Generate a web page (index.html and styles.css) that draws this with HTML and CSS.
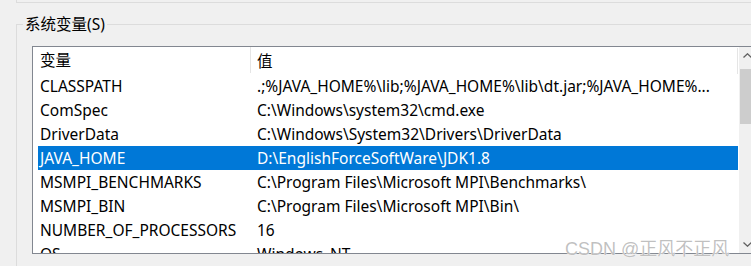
FILE: index.html
```html
<!DOCTYPE html>
<html lang="zh-CN">

<head>
  <meta charset="UTF-8">
  <title>系统变量</title>
  <link rel="stylesheet" href="styles.css">
</head>

<body>
  <div class="prev-group"></div>
  <fieldset class="group">
    <legend>系统变量(S)</legend>
    <div class="list">
      <div class="list-body">
        <div class="row head">
          <span class="c1">变量</span>
          <span class="c2">值</span>
        </div>
        <div class="row"><span class="c1">CLASSPATH</span><span class="c2">.;%JAVA_HOME%\lib;%JAVA_HOME%\lib\dt.jar;%JAVA_HOME%...</span></div>
        <div class="row"><span class="c1">ComSpec</span><span class="c2">C:\Windows\system32\cmd.exe</span></div>
        <div class="row"><span class="c1">DriverData</span><span class="c2">C:\Windows\System32\Drivers\DriverData</span></div>
        <div class="row selected"><span class="c1">JAVA_HOME</span><span class="c2">D:\EnglishForceSoftWare\JDK1.8</span></div>
        <div class="row"><span class="c1">MSMPI_BENCHMARKS</span><span class="c2">C:\Program Files\Microsoft MPI\Benchmarks\</span></div>
        <div class="row"><span class="c1">MSMPI_BIN</span><span class="c2">C:\Program Files\Microsoft MPI\Bin\</span></div>
        <div class="row"><span class="c1">NUMBER_OF_PROCESSORS</span><span class="c2">16</span></div>
        <div class="row"><span class="c1">OS</span><span class="c2">Windows_NT</span></div>
      </div>
      <div class="scrollbar">
        <span class="arrow">
          <svg width="9" height="5" viewBox="0 0 9 5"><polyline points="0.5,4.5 4.5,0.8 8.5,4.5" fill="none" stroke="#606060" stroke-width="1.3"/></svg>
        </span>
        <span class="thumb"></span>
        <span class="track"></span>
        <span class="arrow">
          <svg width="9" height="5" viewBox="0 0 9 5"><polyline points="0.5,0.5 4.5,4.2 8.5,0.5" fill="none" stroke="#606060" stroke-width="1.3"/></svg>
        </span>
      </div>
    </div>
  </fieldset>
  <div class="mark">CSDN @正风不正风</div>
</body>

</html>
```

FILE: styles.css
```css
* {
  box-sizing: border-box;
}

html {
  overflow: hidden;
}

body {
  margin: 0;
  width: 751px;
  height: 266px;
  overflow: hidden;
  position: relative;
  background: #f0f0f0;
  font-family: "Noto Sans", "Noto Sans CJK SC", sans-serif;
  font-size: 15.5px;
  color: #000;
}

/* 上一个分组框的底边 */
.prev-group {
  margin-left: 16px;
  height: 3px;
  border-left: 1px solid #dcdcdc;
  border-bottom: 1px solid #dcdcdc;
}

.group {
  margin: 11px 0 0 16px;
  padding: 0;
  width: 760px;
  height: 260px;
  border: 1px solid #dcdcdc;
}

.group legend {
  margin-left: 6px;
  padding: 0 2px;
  line-height: 20px;
}

.list {
  display: flex;
  margin: 12px 0 0 15px;
  width: 725px;
  height: 208px;
  border: 1px solid #828790;
  background: #fff;
}

.list-body {
  flex: 1;
  overflow: hidden;
}

.row {
  display: flex;
  height: 24px;
  margin: 0 1px 0 5px;
  align-items: center;
  white-space: nowrap;
}

.row.head {
  height: 27px;
}

.c1 {
  width: 213px;
  padding-left: 2px;
  overflow: hidden;
}

.c2 {
  flex: 1;
  padding-left: 6px;
  overflow: hidden;
}

.head .c1,
.head .c2 {
  height: 26px;
  line-height: 26px;
  border-right: 1px solid #e5e5e5;
}

.head .c1 {
  align-self: flex-start;
}

.row.selected {
  background: #0078d7;
  color: #fff;
}

.scrollbar {
  width: 17px;
  display: flex;
  flex-direction: column;
  background: #f0f0f0;
}

.arrow {
  height: 17px;
  display: flex;
  align-items: center;
  justify-content: center;
}

.thumb {
  margin: 5px 1px 0;
  height: 55px;
  background: #cdcdcd;
}

.track {
  flex: 1;
}

.mark {
  position: absolute;
  left: 565px;
  top: 234px;
  font-family: "Liberation Sans", "Noto Sans CJK SC", sans-serif;
  font-size: 18px;
  color: rgba(130, 130, 130, 0.5);
  text-shadow: 0 0 1px #fff, 0 0 1px #fff;
}
```
